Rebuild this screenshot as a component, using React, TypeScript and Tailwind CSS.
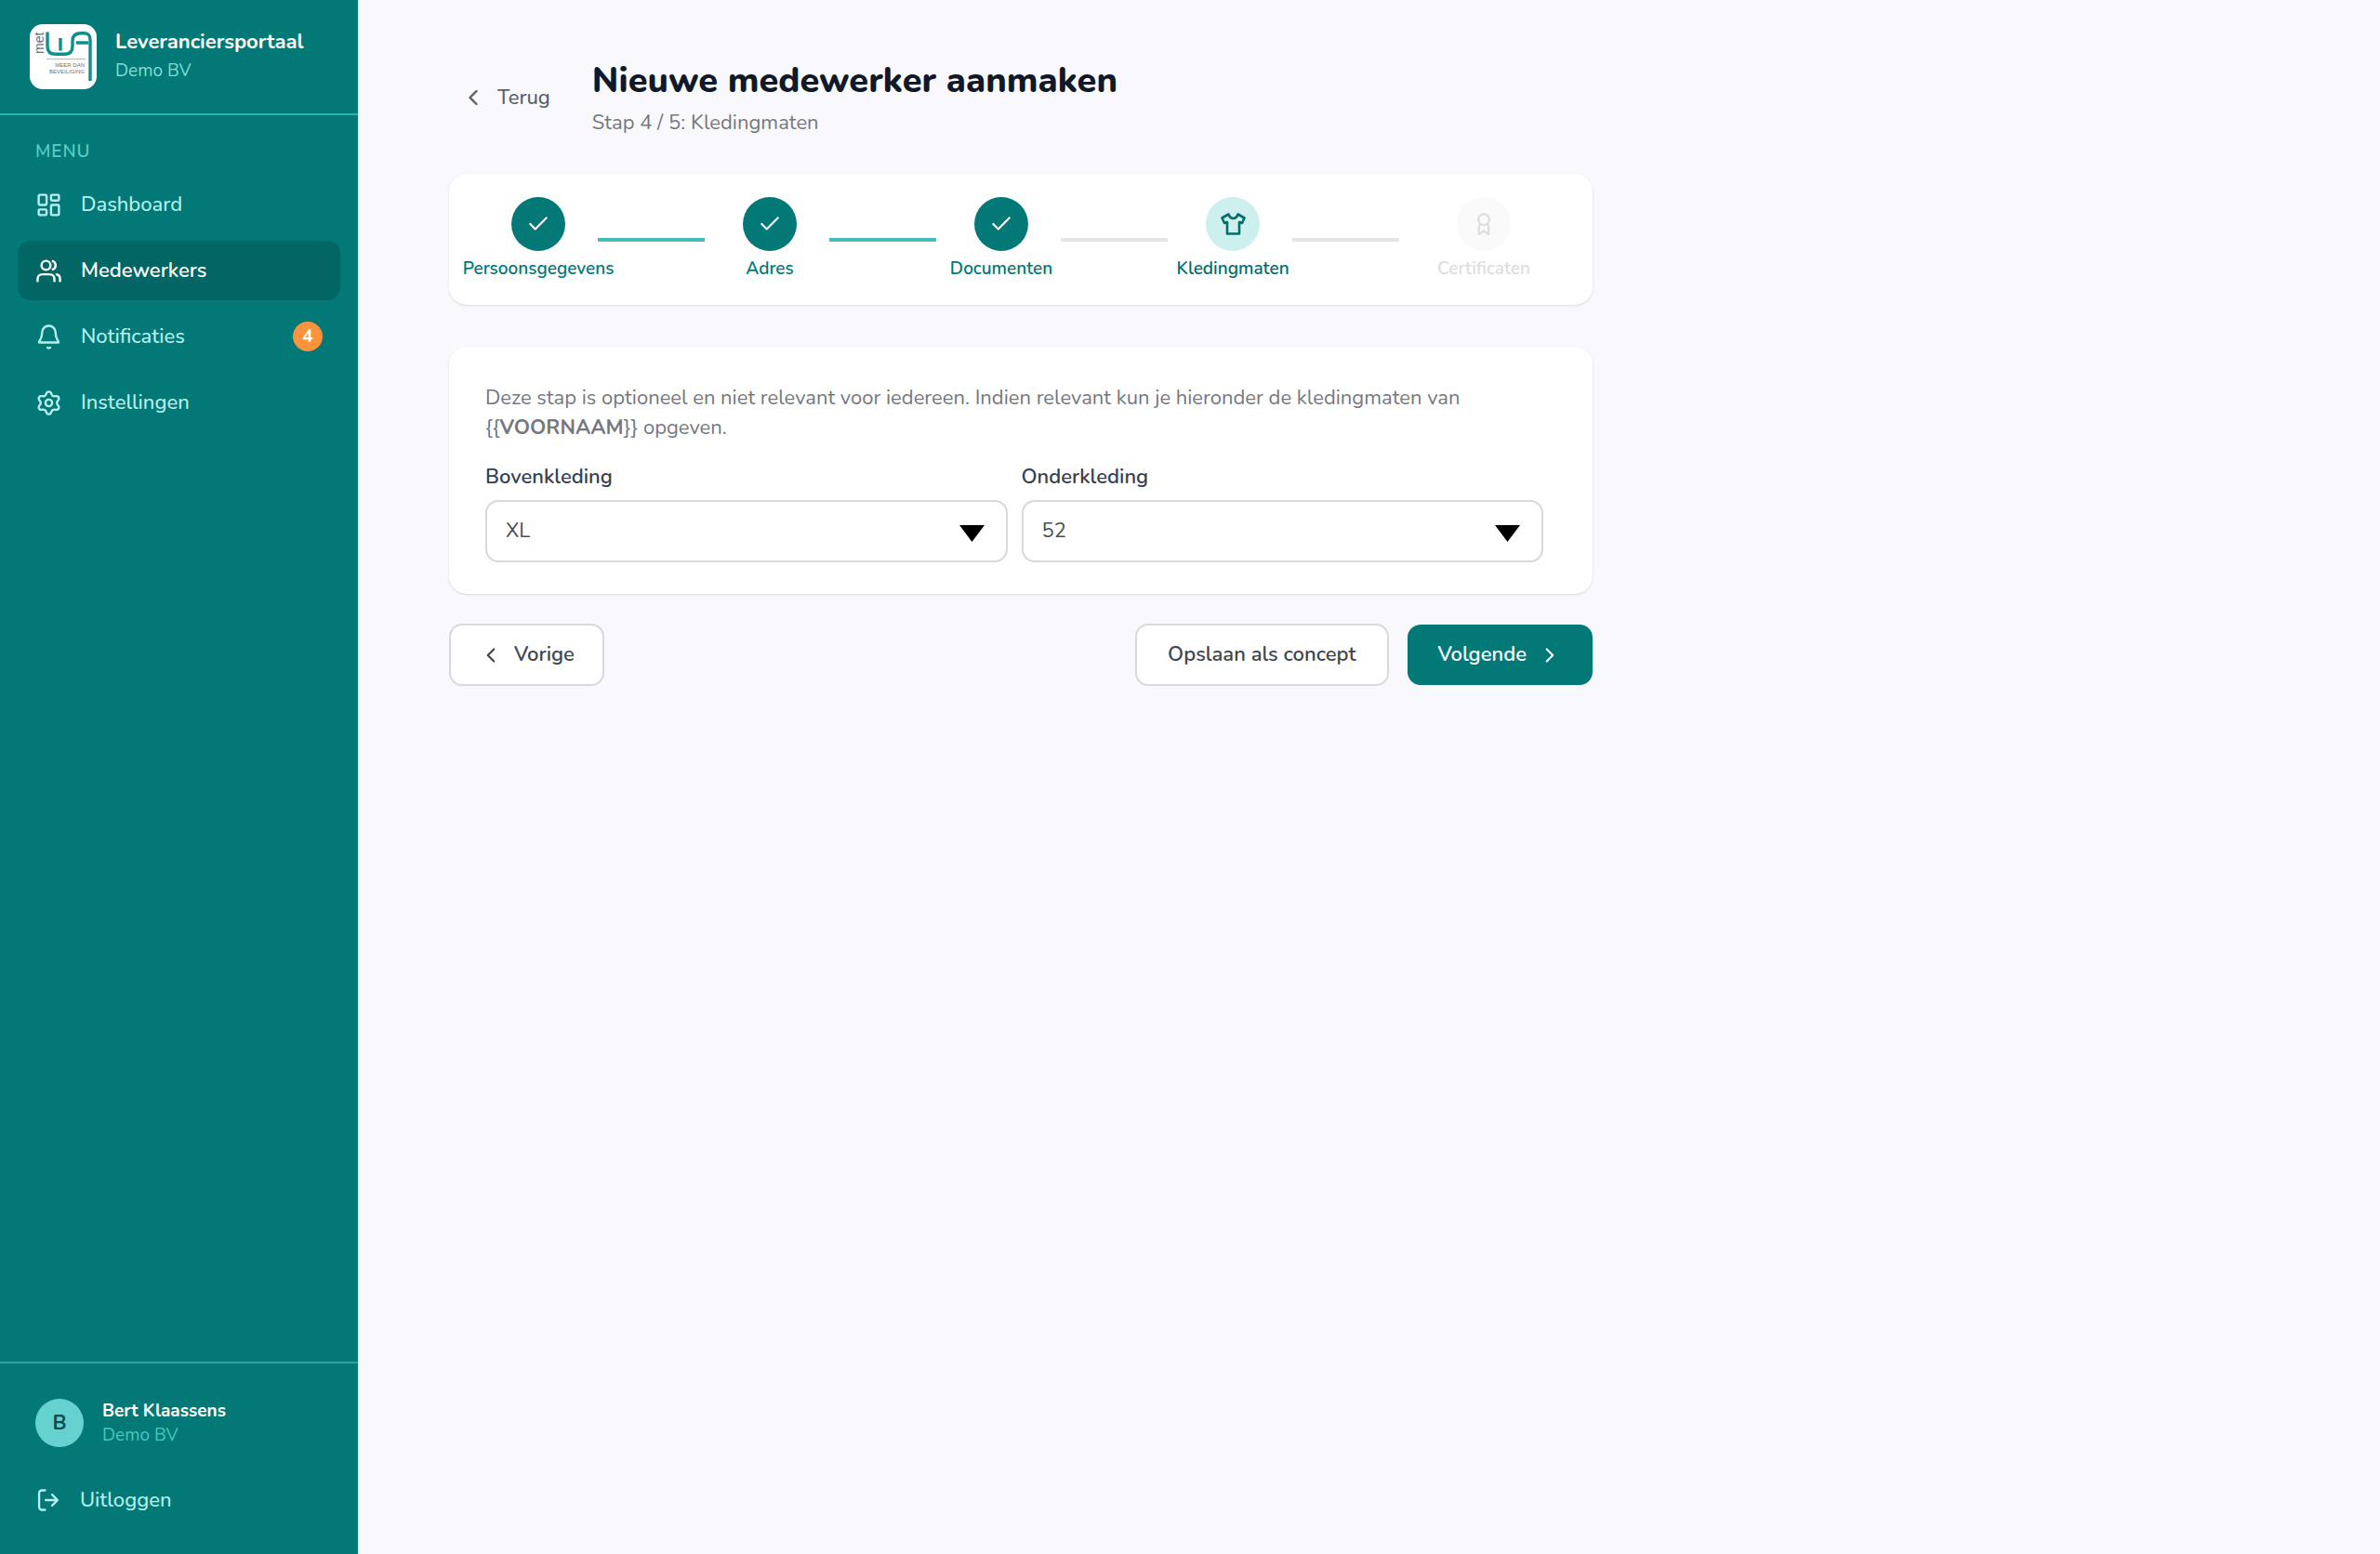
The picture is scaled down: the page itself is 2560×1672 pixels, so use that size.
import React, { useState } from "react"
import { Check, ChevronLeft, ChevronRight, LayoutDashboard } from "lucide-react"
import clsx from "clsx"

type IconProps = { className?: string }

function StrokeIcon({ d, className, children }: IconProps & { d: string; children?: React.ReactNode }) {
  return (
    <svg
      viewBox="0 0 24 24"
      fill="none"
      stroke="currentColor"
      strokeWidth={2}
      strokeLinecap="round"
      strokeLinejoin="round"
      className={className}
      aria-hidden="true"
    >
      <path d={d} />
      {children}
    </svg>
  )
}

const UsersIcon = ({ className }: IconProps) => (
  <StrokeIcon
    className={className}
    d="M22 21V19C22 17.1362 20.7252 15.5701 19 15.126M15.5 3.29076C16.9659 3.88415 18 5.32131 18 7C18 8.67869 16.9659 10.1159 15.5 10.7092M17 21C17 19.1362 17 18.2044 16.6955 17.4693C16.2895 16.4892 15.5108 15.7105 14.5307 15.3045C13.7956 15 12.8638 15 11 15H8C6.13623 15 5.20435 15 4.46927 15.3045C3.48915 15.7105 2.71046 16.4892 2.30448 17.4693C2 18.2044 2 19.1362 2 21M13.5 7C13.5 9.20914 11.7091 11 9.5 11C7.29086 11 5.5 9.20914 5.5 7C5.5 4.79086 7.29086 3 9.5 3C11.7091 3 13.5 4.79086 13.5 7Z"
  />
)

const BellIcon = ({ className }: IconProps) => (
  <StrokeIcon
    className={className}
    d="M10.8 21.6C11.5 22.1 12.5 22.1 13.2 21.6M18 8C18 6.4087 17.3679 4.88258 16.2427 3.75736C15.1174 2.63214 13.5913 2 12 2C10.4087 2 8.88262 2.63214 7.7574 3.75736C6.63218 4.88258 6 6.4087 6 8C6 11.0902 5.22049 13.206 4.34968 14.6054C3.61515 15.7859 3.24788 16.3761 3.26134 16.5408C3.27626 16.7231 3.31488 16.7926 3.46179 16.9016C3.59448 17 4.19261 17 5.38887 17H18.6112C19.8074 17 20.4056 17 20.5382 16.9016C20.6852 16.7926 20.7238 16.7231 20.7387 16.5408C20.7522 16.3761 20.3849 15.7859 19.6504 14.6054C18.7795 13.206 18 11.0902 18 8Z"
  />
)

const GearIcon = ({ className }: IconProps) => (
  <StrokeIcon
    className={className}
    d="M9.39504 19.3711L9.97949 20.6856C10.1532 21.0768 10.4368 21.4093 10.7957 21.6426C11.1547 21.8759 11.5736 22.0001 12.0017 22C12.4298 22.0001 12.8488 21.8759 13.2077 21.6426C13.5667 21.4093 13.8502 21.0768 14.0239 20.6856L14.6084 19.3711C14.8164 18.9047 15.1664 18.5159 15.6084 18.26C16.0532 18.0034 16.5678 17.8941 17.0784 17.9478L18.5084 18.1C18.9341 18.145 19.3637 18.0656 19.7451 17.8713C20.1265 17.6771 20.4434 17.3763 20.6573 17.0056C20.8714 16.635 20.9735 16.2103 20.951 15.7829C20.9285 15.3555 20.7825 14.9438 20.5306 14.5978L19.6839 13.4344C19.3825 13.0171 19.2214 12.5148 19.2239 12C19.2238 11.4866 19.3864 10.9864 19.6884 10.5711L20.535 9.40778C20.7869 9.06175 20.933 8.65007 20.9554 8.22267C20.9779 7.79528 20.8759 7.37054 20.6617 7C20.4478 6.62923 20.1309 6.32849 19.7495 6.13423C19.3681 5.93997 18.9386 5.86053 18.5128 5.90556L17.0828 6.05778C16.5722 6.11141 16.0576 6.00212 15.6128 5.74556C15.1699 5.48825 14.8199 5.09736 14.6128 4.62889L14.0239 3.31444C13.8502 2.92317 13.5667 2.59072 13.2077 2.3574C12.8488 2.12408 12.4298 1.99993 12.0017 2C11.5736 1.99993 11.1547 2.12408 10.7957 2.3574C10.4368 2.59072 10.1532 2.92317 9.97949 3.31444L9.39504 4.62889C9.18797 5.09736 8.83792 5.48825 8.39504 5.74556C7.95026 6.00212 7.43571 6.11141 6.92504 6.05778L5.49059 5.90556C5.06484 5.86053 4.63526 5.93997 4.25386 6.13423C3.87247 6.32849 3.55563 6.62923 3.34171 7C3.12753 7.37054 3.02549 7.79528 3.04798 8.22267C3.07046 8.65007 3.2165 9.06175 3.46838 9.40778L4.31504 10.5711C4.61698 10.9864 4.77958 11.4866 4.77949 12C4.77958 12.5134 4.61698 13.0137 4.31504 13.4289L3.46838 14.5922C3.2165 14.9382 3.07046 15.3499 3.04798 15.7773C3.02549 16.2047 3.12753 16.6295 3.34171 17C3.55584 17.3706 3.8727 17.6712 4.25404 17.8654C4.63538 18.0596 5.06486 18.1392 5.49059 18.0944L6.92059 17.9422C7.43127 17.8886 7.94581 17.9979 8.39059 18.2544C8.83513 18.511 9.18681 18.902 9.39504 19.3711Z"
  >
    <circle cx={12} cy={12} r={3} />
  </StrokeIcon>
)

const LogoutIcon = ({ className }: IconProps) => (
  <StrokeIcon className={className} d="M15.5 7L20.5 12L15.5 17M20 12H9.5M9 3H6A2.5 2.5 0 0 0 3.5 5.5V18.5A2.5 2.5 0 0 0 6 21H9" />
)

const AwardIcon = ({ className }: IconProps) => (
  <StrokeIcon className={className} d="M8.5 12.5L7.5 14V21.5L12 18.5L16.5 21.5V14L15.5 12.5">
    <circle cx={12} cy={8} r={5} />
  </StrokeIcon>
)

const ShirtIcon = ({ className }: IconProps) => (
  <svg viewBox="0 0 27 24" fill="none" stroke="currentColor" strokeWidth={2.6} strokeLinejoin="round" className={className} aria-hidden="true">
    <path d="M8.5 1.5L1.5 5.5L4 11L7 10V22.5H20V10L23 11L25.5 5.5L18.5 1.5C17.5 4.8 16 6 13.5 6S9.5 4.8 8.5 1.5Z" />
  </svg>
)

function Logo() {
  return (
    <svg viewBox="0 0 72 70" className="h-[70px] w-[72px] shrink-0 rounded-[14px] bg-white" role="img" aria-label="met WA, meer dan beveiliging">
      <g fill="none" stroke="#0d908b" strokeWidth={3.4}>
        <path d="M19 8.5V24C19 30 22 32.3 28 32.3H37C43 32.3 46 30 46 24V18C46 12 49 9.8 55 9.8H58C63 9.8 65 11.5 65 17V61" />
        <path d="M33 15V28.5M50 20H63" />
      </g>
      <path d="M18 37.5H60" stroke="#bbb" strokeWidth={1} />
      <g fill="#6f7375" fontFamily="Liberation Sans, sans-serif">
        <text fontSize={14} transform="translate(15 32) rotate(-90)">met</text>
        <text x={59} y={46} fontSize={6} textAnchor="end">MEER DAN</text>
        <text x={59} y={53} fontSize={6} textAnchor="end">BEVEILIGING</text>
      </g>
    </svg>
  )
}

const menu = [
  { label: "Dashboard", icon: LayoutDashboard },
  { label: "Medewerkers", icon: UsersIcon, active: true },
  { label: "Notificaties", icon: BellIcon, badge: 4 },
  { label: "Instellingen", icon: GearIcon },
]

function Sidebar() {
  return (
    <aside className="flex w-[385px] shrink-0 flex-col bg-[#027976] text-[#b5eeec]">
      <div className="flex h-[124px] items-center gap-5 border-b-2 border-[#2fb3ad] px-8">
        <Logo />
        <div>
          <p className="text-[22px] leading-[31px] font-bold text-white">Leveranciersportaal</p>
          <p className="text-[19px] leading-[31px] text-[#7fdcd9]">Demo BV</p>
        </div>
      </div>

      <nav className="flex-1 px-[19px] pt-6">
        <h2 className="mb-[10px] px-[19px] text-[19px] leading-[30px] font-semibold tracking-wider text-[#59cbc8]">MENU</h2>
        <ul className="flex flex-col gap-[7px]">
          {menu.map(({ label, icon: Icon, active, badge }) => (
            <li key={label}>
              <a
                href="#"
                aria-current={active ? "page" : undefined}
                className={clsx(
                  "flex h-16 items-center gap-5 rounded-[14px] px-[19px] text-[22px]",
                  active ? "bg-[#016664] font-semibold text-white" : "font-medium"
                )}
              >
                <Icon className="size-[29px]" />
                <span className="flex-1">{label}</span>
                {badge && (
                  <span className="flex size-8 items-center justify-center rounded-full bg-[#fb923c] text-[19px] font-bold text-white">
                    {badge}
                  </span>
                )}
              </a>
            </li>
          ))}
        </ul>
      </nav>

      <div className="border-t-2 border-[#2fa39f] px-[19px] pt-[38px] pb-[26px]">
        <div className="flex items-center gap-5 px-[19px]">
          <div className="flex size-[52px] items-center justify-center rounded-full bg-[#66d2d0] text-[22px] font-bold text-[#064e4c]">B</div>
          <div className="leading-[26px]">
            <p className="text-[19px] font-bold text-white">Bert Klaassens</p>
            <p className="text-[19px] text-[#4cc4c1]">Demo BV</p>
          </div>
        </div>
        <button type="button" className="mt-[25px] flex h-16 w-full items-center gap-5 px-[19px] text-left text-[22px] font-medium">
          <LogoutIcon className="size-7" />
          Uitloggen
        </button>
      </div>
    </aside>
  )
}

type StepState = "done" | "current" | "todo"

const steps: { label: string; state: StepState; icon: React.ComponentType<IconProps> }[] = [
  { label: "Persoonsgegevens", state: "done", icon: Check },
  { label: "Adres", state: "done", icon: Check },
  { label: "Documenten", state: "done", icon: Check },
  { label: "Kledingmaten", state: "current", icon: ShirtIcon },
  { label: "Certificaten", state: "todo", icon: AwardIcon },
]

const circleStyles: Record<StepState, string> = {
  done: "bg-[#027976] text-white",
  current: "bg-[#cdefed] text-[#026e6a]",
  todo: "bg-[#fafafa] text-[#dedede]",
}

const iconStyles: Record<StepState, string> = {
  done: "size-[26px]",
  current: "h-6 w-[27px]",
  todo: "size-7",
}

const labelStyles: Record<StepState, string> = {
  done: "text-[#027976]",
  current: "text-[#026e6a]",
  todo: "text-[#dedede]",
}

function Stepper() {
  return (
    <ol className="flex rounded-[19px] bg-white px-8 py-[25px] shadow-sm">
      {steps.map(({ label, state, icon: Icon }, i) => {
        const last = i === steps.length - 1
        return (
          <li key={label} className={clsx("flex items-center", last ? "w-[170px] justify-center" : "flex-1 pr-[6px]")}>
            <div className="flex w-32 flex-col items-center gap-[6px]">
              <div className={clsx("flex size-[58px] items-center justify-center rounded-full", circleStyles[state])}>
                <Icon className={iconStyles[state]} />
              </div>
              <span className={clsx("text-[19px] leading-[27px] font-semibold whitespace-nowrap", labelStyles[state])}>{label}</span>
            </div>
            {!last && (
              <div className={clsx("h-1 flex-1", state === "done" && steps[i + 1].state === "done" ? "bg-[#45bdb9]" : "bg-[#e5e5e5]")} />
            )}
          </li>
        )
      })}
    </ol>
  )
}

interface SizeSelectProps {
  id: string
  label: string
  options: string[]
  initial: string
}

function SizeSelect({ id, label, options, initial }: SizeSelectProps) {
  const [value, setValue] = useState(initial)

  return (
    <div>
      <label htmlFor={id} className="block text-[22px] leading-[34px] font-semibold text-[#374151]">
        {label}
      </label>
      <div className="relative mt-2">
        <select
          id={id}
          value={value}
          onChange={(e) => setValue(e.target.value)}
          className="h-[67px] w-full appearance-none rounded-[14px] border-2 border-[#d7d9dd] bg-white px-5 text-[22px] text-[#4b4f58]"
        >
          {options.map((o) => (
            <option key={o}>{o}</option>
          ))}
        </select>
        <svg viewBox="0 0 27 18" className="pointer-events-none absolute top-[27px] right-[25px] h-[18px] w-[27px]" aria-hidden="true">
          <path d="M0 0H27L13.5 18Z" />
        </svg>
      </div>
    </div>
  )
}

const outlineButton = "flex h-[67px] items-center rounded-[14px] border-2 border-[#d7d9dd] bg-white text-[22px] font-semibold text-[#3f4650]"

export default function App() {
  return (
    <div className="flex min-h-screen bg-[#f9f9fd] font-[Nunito,Lato,sans-serif]">
      <Sidebar />
      <main className="flex-1 px-[98px] pt-[61px]">
        <div className="max-w-[1230px]">
          <header className="mb-[38px] flex items-center gap-[33px]">
            <button type="button" className="flex h-16 items-center gap-3 px-3 text-[22px] font-medium text-[#5b606a]">
              <ChevronLeft className="size-7" />
              Terug
            </button>
            <div>
              <h1 className="text-[38px] leading-[52px] font-extrabold text-[#111827]">Nieuwe medewerker aanmaken</h1>
              <p className="mt-[2px] text-[22px] leading-[34px] text-[#75787f]">Stap 4 / 5: Kledingmaten</p>
            </div>
          </header>

          <Stepper />

          <form onSubmit={(e) => e.preventDefault()}>
            <div className="mt-[45px] rounded-[19px] bg-white pt-[39px] pr-[53px] pb-[34px] pl-[39px] shadow-sm">
              <p className="text-[22px] leading-8 text-[#75787f]">
                Deze stap is optioneel en niet relevant voor iedereen. Indien relevant kun je hieronder de kledingmaten van {"{{"}
                <strong>VOORNAAM</strong>
                {"}}"} opgeven.
              </p>
              <div className="mt-5 grid grid-cols-2 gap-[15px]">
                <SizeSelect id="bovenkleding" label="Bovenkleding" options={["S", "M", "L", "XL", "XXL"]} initial="XL" />
                <SizeSelect id="onderkleding" label="Onderkleding" options={["48", "50", "52", "54"]} initial="52" />
              </div>
            </div>

            <div className="mt-8 flex items-center gap-5">
              <button type="button" className={clsx(outlineButton, "mr-auto gap-3 px-[30px]")}>
                <ChevronLeft className="size-[26px]" />
                Vorige
              </button>
              <button type="button" className={clsx(outlineButton, "px-[33px]")}>
                Opslaan als concept
              </button>
              <button type="submit" className="flex h-[65px] items-center gap-3 rounded-[14px] bg-[#027976] px-[33px] text-[22px] font-semibold text-white">
                Volgende
                <ChevronRight className="size-[26px]" />
              </button>
            </div>
          </form>
        </div>
      </main>
    </div>
  )
}
